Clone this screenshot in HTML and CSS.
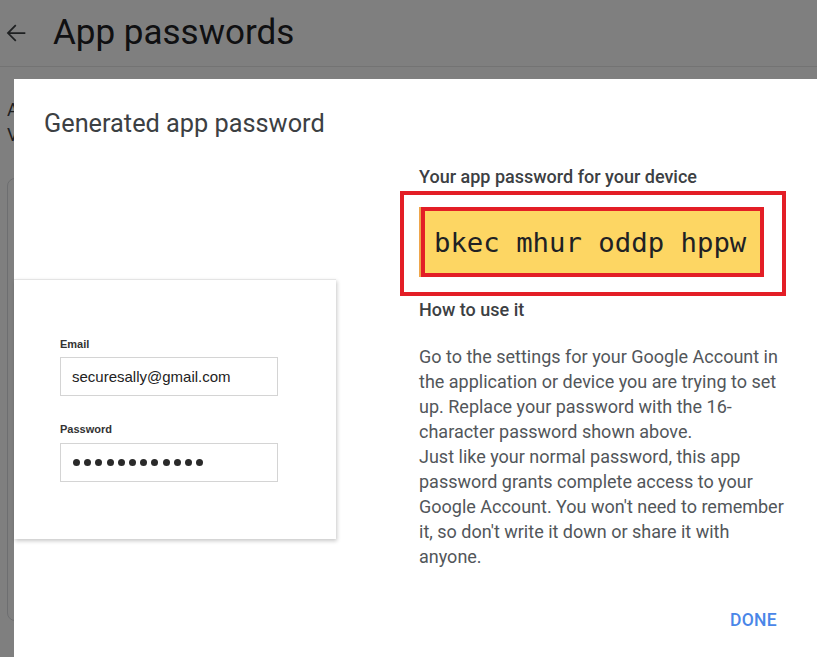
FILE: index.html
```html
<!DOCTYPE html>
<html lang="en">
<head>
<meta charset="utf-8">
<title>App passwords</title>
<link rel="stylesheet" href="styles.css">
</head>
<body>
<div class="page">
  <header class="topbar">
    <svg class="back" viewBox="0 0 24 24" width="28" height="28" aria-hidden="true">
      <path d="M20 11.25H6.9l5.45-5.45-1.06-1.06L4.03 12l7.26 7.26 1.06-1.06-5.45-5.45H20z" fill="currentColor"/>
    </svg>
    <h1 class="page-title">App passwords</h1>
  </header>
  <main class="content">
    <div class="intro-clip">
      <p class="intro">App passwords let you sign in to your Google Account from apps on devices that don't support 2-Step<br>Verification. You'll only need to enter it once so you don't need to remember it.</p>
    </div>
    <section class="list-card"></section>
  </main>
</div>
<div class="scrim"></div>
<div class="dialog" role="dialog">
  <h2 class="dialog-title">Generated app password</h2>
  <div class="dialog-body">
    <div class="illustration">
      <div class="field-label">Email</div>
      <div class="field-input">securesally@gmail.com</div>
      <div class="field-label second">Password</div>
      <div class="field-input dots">
        <span class="dot"></span><span class="dot"></span><span class="dot"></span><span class="dot"></span><span class="dot"></span><span class="dot"></span><span class="dot"></span><span class="dot"></span><span class="dot"></span><span class="dot"></span><span class="dot"></span><span class="dot"></span>
      </div>
    </div>
    <div class="info">
      <div class="info-heading">Your app password for your device</div>
      <div class="highlight">
        <div class="pw-box">
          <span class="pw-text">bkec mhur oddp hppw</span>
          <span class="pw-mark"></span>
        </div>
      </div>
      <div class="info-heading howto">How to use it</div>
      <p class="info-text">Go to the settings for your Google Account in the application or device you are trying to set up. Replace your password with the 16-character password shown above.<br>Just like your normal password, this app password grants complete access to your Google Account. You won't need to remember it, so don't write it down or share it with anyone.</p>
    </div>
  </div>
  <div class="actions">
    <button class="done">DONE</button>
  </div>
</div>
</body>
</html>
```

FILE: styles.css
```css
html, body {
  margin: 0;
  padding: 0;
}

body {
  width: 817px;
  height: 657px;
  overflow: hidden;
  position: relative;
  background: #ffffff;
  font-family: Roboto, "Liberation Sans", Arial, sans-serif;
}

.page {
  height: 657px;
}

.topbar {
  height: 66px;
  border-bottom: 1px solid #e6e6e6;
  display: flex;
  align-items: center;
  padding-left: 2px;
}

.back {
  color: #3c4043;
  display: block;
  flex: none;
}

.page-title {
  margin: 0 0 0 23px;
  font-family: Roboto, "Open Sans", sans-serif;
  font-weight: 400;
  font-size: 35px;
  line-height: 40px;
  color: #202124;
}

.content {
  padding-left: 7px;
}

.intro-clip {
  width: 7px;
  overflow: hidden;
  margin-top: 30px;
}

.intro {
  margin: 0;
  font-size: 18px;
  line-height: 25px;
  color: #3c4043;
  white-space: nowrap;
}

.list-card {
  margin-top: 31px;
  width: 780px;
  height: 443px;
  box-sizing: border-box;
  border: 1px solid #dadce0;
  border-radius: 8px;
}

.scrim {
  position: absolute;
  inset: 0;
  background: rgba(0, 0, 0, 0.5);
}

.dialog {
  position: absolute;
  left: 14px;
  top: 79px;
  right: 0;
  bottom: 0;
  background: #ffffff;
  padding: 31px 40px 0 30px;
  box-sizing: border-box;
}

.dialog-title {
  margin: 0;
  font-family: Roboto, "Open Sans", sans-serif;
  font-weight: 400;
  font-size: 25.3px;
  line-height: 28px;
  color: #3c4043;
}

.dialog-body {
  display: flex;
  align-items: flex-start;
  margin-top: 27px;
}

.illustration {
  flex: none;
  width: 322px;
  height: 260px;
  margin: 114px 0 0 -30px;
  box-sizing: border-box;
  padding: 58px 0 0 46px;
  border-top: 1px solid #e4e4e4;
  box-shadow: 1px 2px 4px rgba(0, 0, 0, 0.22);
  font-family: "Liberation Sans", Arial, sans-serif;
  background: #ffffff;
}

.field-label {
  font-size: 11px;
  line-height: 14px;
  font-weight: 700;
  color: #333333;
  margin-top: -1px;
}

.field-label.second {
  margin-top: 26px;
}

.field-input {
  margin-top: 6px;
  width: 218px;
  height: 39px;
  box-sizing: border-box;
  border: 1px solid #d4d4d4;
  padding-left: 11px;
  display: flex;
  align-items: center;
  font-size: 15px;
  color: #222222;
}

.field-input.dots {
  margin-top: 7px;
  gap: 4.2px;
  padding-left: 12px;
}

.dot {
  width: 7px;
  height: 7px;
  border-radius: 50%;
  background: #2a2a2a;
}

.info {
  flex: none;
  width: 372px;
  margin-left: 83px;
}

.info-heading {
  font-size: 18px;
  line-height: 24px;
  font-weight: 500;
  color: #3c4043;
}

.highlight {
  margin: 2px 0 0 -19px;
  width: 386px;
  box-sizing: border-box;
  border: 4px solid #e31e26;
  padding: 12px 0 15px 15px;
}

.pw-box {
  position: relative;
  width: 345px;
  height: 70px;
  box-sizing: border-box;
  background: #fdd663;
  border-left: 2px solid #efa64b;
  padding-left: 13px;
  display: flex;
  align-items: center;
}

.pw-text {
  font-family: "DejaVu Sans Mono", "Liberation Mono", monospace;
  font-size: 27.3px;
  color: #202124;
  white-space: pre;
}

.pw-mark {
  position: absolute;
  left: 0;
  top: 0;
  right: 0;
  bottom: 0;
  border: 4px solid #e31e26;
}

.howto {
  margin-top: 2px;
}

.info-text {
  margin: 22px 0 0;
  font-size: 18px;
  line-height: 25px;
  color: #52565a;
}

.actions {
  display: flex;
  justify-content: flex-end;
  margin-top: 41px;
}

.done {
  border: 0;
  background: none;
  padding: 0;
  font-family: Roboto, sans-serif;
  font-size: 17.5px;
  font-weight: 500;
  line-height: 20px;
  letter-spacing: 0.3px;
  color: #4a86e8;
  cursor: pointer;
}
```
